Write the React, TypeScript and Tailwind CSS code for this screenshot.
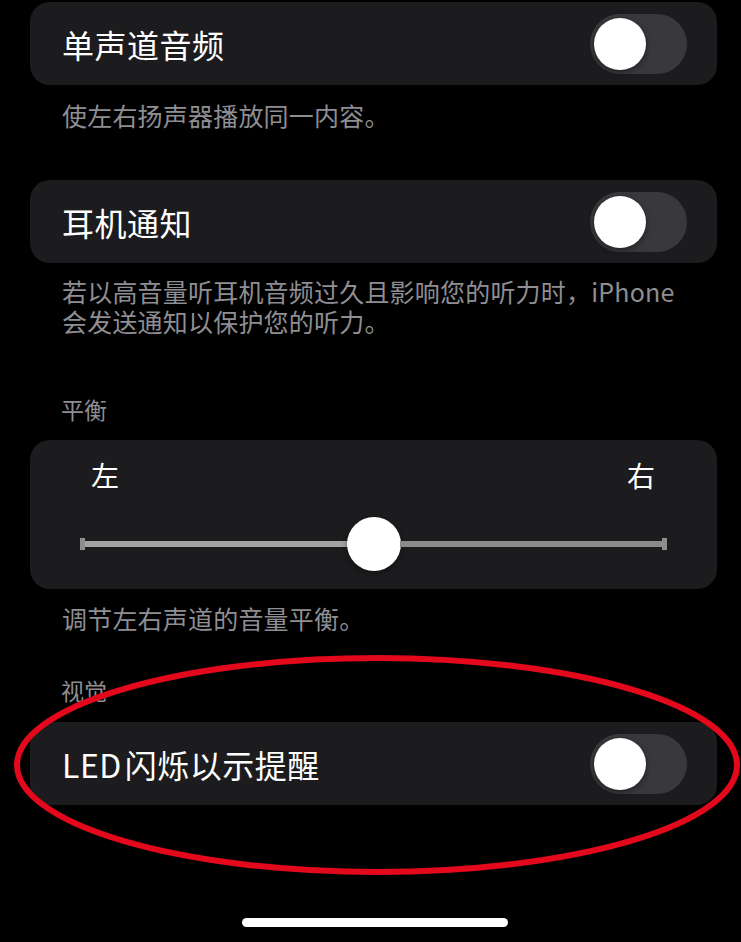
import React from "react";

const FONT = { fontFamily: '"Noto Sans CJK SC", "Noto Sans", sans-serif' };

const Toggle = () => (
    <div className="w-[97px] h-[60px] rounded-full bg-[#39393d] p-[4px] flex items-center">
        <div className="w-[52px] h-[52px] rounded-full bg-white shadow-[0_2px_6px_rgba(0,0,0,0.45)]" />
    </div>
);

const SwitchRow = ({ label }: { label: React.ReactNode }) => (
    <div className="h-[83px] rounded-[20px] bg-[#1c1c1e] flex items-center justify-between pl-[32px] pr-[30px]">
        <span className="text-[32px] text-white leading-none tracking-[0.5px]">{label}</span>
        <Toggle />
    </div>
);

const Footer = ({ children, className = "" }: any) => (
    <p className={`text-[25px] leading-[30px] tracking-[0.2px] text-[#8e8e93] pl-[32px] pr-[30px] ${className}`}>{children}</p>
);

const Header = ({ children, className = "" }: any) => (
    <p className={`text-[23px] leading-[28px] text-[#8e8e93] pl-[31px] ${className}`}>{children}</p>
);

export default function App() {
    return (
        <div className="w-[741px] h-[942px] bg-black relative overflow-hidden" style={FONT}>
            <div className="flex flex-col pl-[30px] pr-[24px] pt-[2px]">
                <SwitchRow label="单声道音频" />
                <Footer className="mt-[15px]">使左右扬声器播放同一内容。</Footer>

                <div className="mt-[50px]">
                    <SwitchRow label="耳机通知" />
                </div>
                <Footer className="mt-[13px]">
                    若以高音量听耳机音频过久且影响您的听力时，iPhone 会发送通知以保护您的听力。
                </Footer>

                <Header className="mt-[59px]">平衡</Header>

                {/* balance slider */}
                <div className="mt-[17px] h-[149px] rounded-[20px] bg-[#1c1c1e] px-[50px] pt-[20px] flex flex-col">
                    <div className="flex justify-between text-[28px] leading-[30px] text-white pl-[11px] pr-[12px]">
                        <span>左</span>
                        <span>右</span>
                    </div>
                    <div className="mt-[27px] flex items-center">
                        <div className="w-[5px] h-[12px] bg-[#8e8e8e]" />
                        <div className="flex-1 h-[6px] bg-[#a3a3a3]" />
                        <div className="w-[54px] h-[54px] rounded-full bg-white -mx-[1px] shadow-[0_2px_6px_rgba(0,0,0,0.4)]" />
                        <div className="flex-1 h-[6px] bg-[#8a8a8a]" />
                        <div className="w-[5px] h-[12px] bg-[#8e8e8e]" />
                    </div>
                </div>
                <Footer className="mt-[14px]">调节左右声道的音量平衡。</Footer>

                <Header className="mt-[43px]">视觉</Header>
                <div className="mt-[18px]">
                    <SwitchRow label={<><span className="mr-[3px]">LED</span>闪烁以示提醒</>} />
                </div>

                <div className="mt-[113px] self-center w-[266px] h-[9px] rounded-full bg-white ml-[2px]" />
            </div>

            {/* red annotation ring */}
            <svg className="absolute inset-0 pointer-events-none" width="741" height="942" viewBox="0 0 741 942">
                <ellipse cx="377" cy="765" rx="360" ry="107" fill="none" stroke="#e3081b" strokeWidth="6" />
            </svg>
        </div>
    );
}
